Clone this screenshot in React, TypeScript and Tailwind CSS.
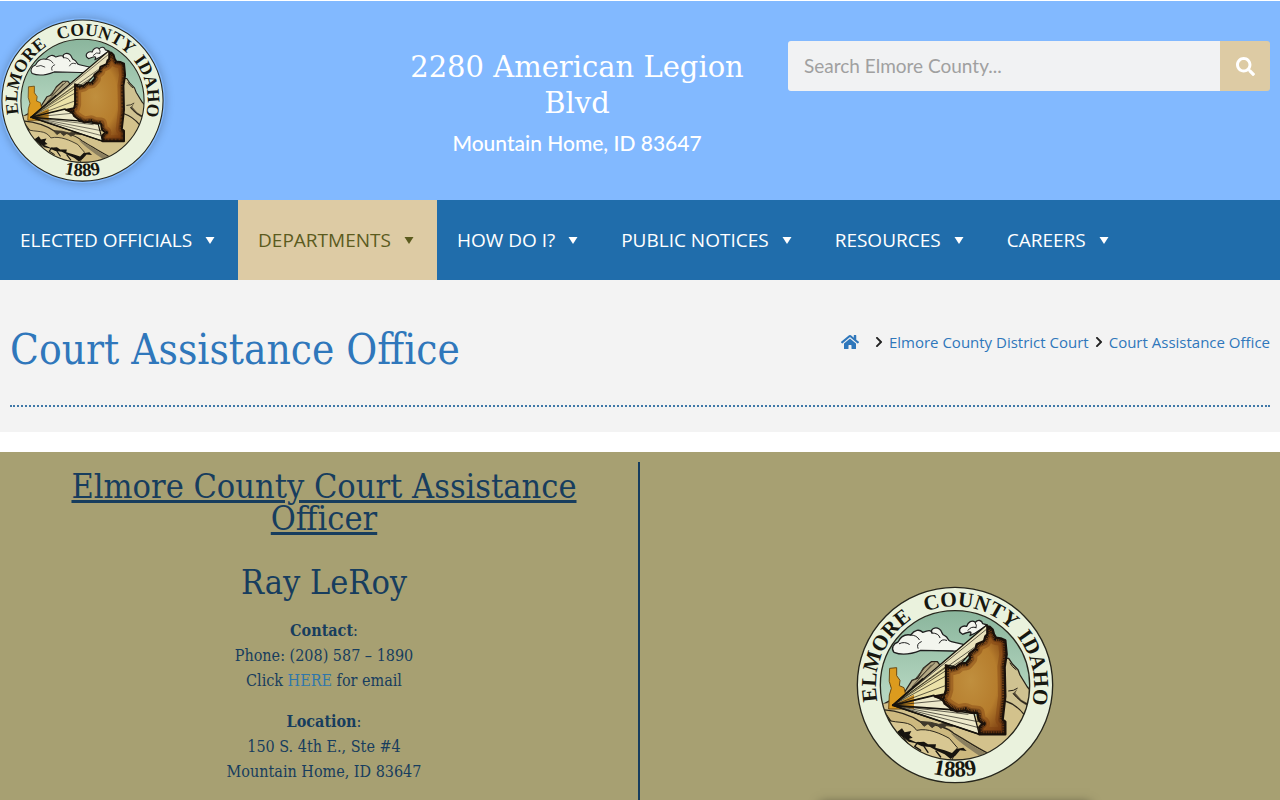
import { useId } from 'react';
import { FaChevronRight, FaHome, FaSearch } from 'react-icons/fa';

const serif = "font-['DejaVu_Serif_Condensed','DejaVu_Serif',serif]";
const sans = "font-['Open_Sans','Noto_Sans',sans-serif]";

const menu = [
    { label: 'ELECTED OFFICIALS', active: false },
    { label: 'DEPARTMENTS', active: true },
    { label: 'HOW DO I?', active: false },
    { label: 'PUBLIC NOTICES', active: false },
    { label: 'RESOURCES', active: false },
    { label: 'CAREERS', active: false },
];

const countyShape = 'M440 140 L448 142 L456 150 L460 164 L466 174 L480 176 L494 182 L498 224 L492 262 L494 350 L486 420 L494 426 L494 464 L416 464 L416 442 L426 432 L414 422 L410 400 L388 398 L374 392 L350 396 L328 384 L312 372 L306 358 L282 350 L312 344 L316 330 L316 258 L330 266 L346 262 L358 252 L376 250 L388 236 L386 222 L404 208 L408 194 L416 190 L430 184 L434 170 L440 164 Z';

function CountySeal({ className }: { className: string }) {
    const id = useId();

    return (
        <svg viewBox="43 16 600 600" className={className} role="img" aria-label="Elmore County seal">
            <defs>
                <linearGradient id={`${id}sky`} x1="0" y1="0" x2="0" y2="1">
                    <stop offset="0" stopColor="#8ab59c" />
                    <stop offset="0.55" stopColor="#b4d6c0" />
                    <stop offset="1" stopColor="#c5dccb" />
                </linearGradient>
                <radialGradient id={`${id}land`} cx="0.5" cy="0.5" r="0.62">
                    <stop offset="0" stopColor="#c08f3e" />
                    <stop offset="0.6" stopColor="#b67d2d" />
                    <stop offset="1" stopColor="#7a3d10" />
                </radialGradient>
                <clipPath id={`${id}disc`}>
                    <circle cx="343" cy="317" r="224" />
                </clipPath>
                <clipPath id={`${id}county`}>
                    <path d={countyShape} />
                </clipPath>
                <path id={`${id}top`} d="M343 554 A237 237 0 1 1 343.1 554" />
                <path id={`${id}bottom`} d="M65 313 A278 278 0 0 0 621 313" />
            </defs>

            <circle cx="343" cy="316" r="293" fill="#eaf2dd" stroke="#26261c" strokeWidth="4" />

            <g clipPath={`url(#${id}disc)`} strokeLinejoin="round" strokeLinecap="round">
                <rect x="110" y="90" width="466" height="460" fill={`url(#${id}sky)`} />

                {/* Clouds */}
                <g fill="#f3f5ee" stroke="#1e1e1e" strokeWidth="4">
                    <path d="M160 218 C150 205 158 192 172 187 C180 170 195 163 210 166 C222 150 236 148 246 158 C262 152 272 150 274 160 C268 148 284 140 296 148 C306 154 302 166 312 168 C326 174 318 184 332 186 L368 194 C372 206 354 216 336 214 L240 212 C210 224 184 228 160 218 Z" />
                    <path d="M358 158 C352 146 366 136 378 140 C382 126 394 120 404 128 C412 118 424 122 426 132 L440 136 L404 160 L388 168 C398 150 380 158 366 164 Z" />
                    <path d="M176 192 Q192 184 206 194 M210 166 Q228 166 236 180 M232 206 Q226 192 242 186 M274 160 Q294 160 298 174 M296 190 Q302 176 318 182 M382 152 Q392 138 406 144 M404 130 Q410 136 406 144" fill="none" strokeWidth="3" />
                </g>

                {/* Back ridges */}
                <path d="M120 378 L190 340 L214 302 L230 296 L248 266 L272 246 L290 246 L330 300 L340 420 Z" fill="#b3a884" stroke="#27221a" strokeWidth="4" />
                <path d="M222 300 L254 262 M214 322 L272 256 M234 296 L282 250" stroke="#4c4433" strokeWidth="3" />
                <path d="M490 235 L504 236 L516 254 L532 270 L538 286 L560 322 L580 344 L580 480 L480 500 Z" fill="#cfc291" stroke="#27221a" strokeWidth="4" />
                <path d="M516 342 L530 328 L524 340 L542 360 L566 374 L568 384 L540 366 Z" fill="#5a513c" />
                <path d="M508 250 Q514 262 526 270 M504 334 Q520 334 530 326 M518 342 Q536 366 566 376" fill="none" stroke="#221e16" strokeWidth="3" />

                {/* Foothills */}
                <path d="M100 372 C180 368 300 380 380 420 L490 370 C520 382 550 390 580 410 L580 560 L100 560 Z" fill="#d3c28c" />
                <path d="M494 364 Q526 374 550 404" fill="none" stroke="#2b261b" strokeWidth="4" />
                <path d="M126 390 C170 394 214 408 242 428 C282 432 326 446 340 462 C370 478 400 500 444 522 L400 550 L240 550 Z" fill="#cdb97f" stroke="#2b261b" strokeWidth="4" />
                <path d="M330 460 C356 470 392 500 436 520 L416 528 C380 504 350 484 330 460 Z" fill="#8b8060" />
                <path d="M134 420 C180 434 206 420 228 452 C262 444 300 462 326 476 L350 504 L330 550 L220 530 Z" fill="#d8c792" stroke="#2b261b" strokeWidth="3" />
                <path d="M238 426 L250 440 L262 432 L274 444 L288 434 L300 446 L318 438 L336 440 L320 430 L294 434 L270 428 Z" fill="#40392b" stroke="#40392b" strokeWidth="3" />
                <path d="M170 456 L184 446 L192 458 L212 454 L206 466 L216 474 L204 478 L226 488 L250 486 L262 494 L286 494 L284 504 L312 512 L334 520 L346 508 L368 504 L378 514 L358 512 L344 528 L330 538 L312 524 L290 514 L268 502 L244 500 L222 490 L204 486 L188 472 L172 466 Z" fill="#17140f" />
                <path d="M232 488 L222 500 L240 512 M250 500 L262 518 M286 514 L300 532 M186 470 L204 496" fill="none" stroke="#17140f" strokeWidth="4" />

                {/* Idaho outline */}
                <path d="M148 266 L168 264 L168 288 L178 302 L176 318 L190 324 L194 342 L220 345 L220 388 L144 388 L146 346 L152 326 L146 306 Z" fill="#dc9b1e" stroke="#6b4810" strokeWidth="3" />

                {/* Projection rays */}
                <g stroke="#16130d">
                    <path d="M156 377 L438 136 L462 180 L386 224 L350 262 L314 256 L312 350 Z" fill="#e9e2bc" strokeWidth="4" />
                    <path d="M156 377 L278 346 L324 374 L330 392 L400 402 L416 464 Z" fill="#eeeacb" strokeWidth="4" />
                    <path d="M180 358 L314 256 L314 340 L200 364 Z" fill="#ece2a8" stroke="none" />
                    <path d="M156 377 L220 345 L220 388 Z" fill="#c78a22" stroke="none" />
                    <path d="M156 377 L436 150 M156 377 L400 204 M156 377 L372 236 M156 377 L314 262 M156 377 L314 290 M156 377 L314 318 M156 377 L310 362 M156 377 L382 404 M156 377 L412 426 M156 377 L414 444" fill="none" strokeWidth="2" />
                    <path d="M156 377 L246 298 M156 377 L280 347 M156 377 L330 390 M156 377 L416 464" fill="none" strokeWidth="5" />
                </g>

                {/* Elmore County, with the shading kept inside its border */}
                <path d={countyShape} fill={`url(#${id}land)`} />
                <g clipPath={`url(#${id}county)`} fill="none">
                    <path d={countyShape} stroke="#7a3d10" strokeOpacity="0.4" strokeWidth="44" />
                    <path d={countyShape} stroke="#4a240c" strokeOpacity="0.4" strokeWidth="26" />
                    <path d={countyShape} stroke="#19100a" strokeWidth="18" strokeDasharray="2 3" strokeLinecap="butt" />
                </g>
                <path d={countyShape} fill="none" stroke="#19100a" strokeWidth="7" />
            </g>

            <circle cx="343" cy="317" r="224" fill="none" stroke="#26261c" strokeWidth="4" />

            <g className="font-['Liberation_Serif',serif] font-bold" fill="#17170f" fontSize="64">
                <text><textPath href={`#${id}top`} startOffset="324">ELMORE</textPath></text>
                <text><textPath href={`#${id}top`} startOffset="655">COUNTY</textPath></text>
                <text><textPath href={`#${id}top`} startOffset="957">IDAHO</textPath></text>
                <text textAnchor="middle" fontSize="68"><textPath href={`#${id}bottom`} startOffset="50%">1889</textPath></text>
            </g>
        </svg>
    );
}

function Header() {
    return (
        <header className="grid min-h-[200px] grid-cols-[3fr_3fr_4fr] border-t border-white bg-[#82b9ff]">
            <a href="#home" className="w-fit pt-[17px]">
                <CountySeal className="size-[165px] rounded-full shadow-[0_0_10px_rgba(0,0,0,0.25)]" />
            </a>

            <div className="pt-12 pl-0.5 text-center text-white">
                <h2 className="font-['DejaVu_Serif',serif] text-[29px] leading-9">2280 American Legion Blvd</h2>
                <p className="mt-2 font-['Lato',sans-serif] text-[21px] leading-7 font-medium">Mountain Home, ID 83647</p>
            </div>

            <form role="search" className="flex h-[90px] pt-10 pr-2.5 pl-5">
                <input
                    type="search"
                    aria-label="Search Elmore County"
                    placeholder="Search Elmore County..."
                    className="min-w-0 flex-1 rounded-l-[3px] bg-[#f1f2f3] px-4 font-['Lato',sans-serif] text-[19px] text-gray-700 outline-none placeholder:text-[#a0a0a0]"
                />
                <button
                    type="submit"
                    aria-label="Search"
                    className="flex w-[50px] items-center justify-center rounded-r-[3px] bg-[#ddcba4] text-white"
                >
                    <FaSearch size={19} />
                </button>
            </form>
        </header>
    );
}

function MainMenu() {
    return (
        <nav className={`${sans} flex bg-[#206dab] text-[19px]`}>
            {menu.map(item => (
                <a
                    key={item.label}
                    href="#menu"
                    className={`flex h-20 items-center gap-3 px-5 whitespace-nowrap ${item.active ? 'bg-[#ddcba4] text-[#5b5b1e]' : 'text-white'}`}
                >
                    {item.label}
                    <svg viewBox="0 0 14 8" className="h-2 w-3.5" fill="currentColor" aria-hidden="true">
                        <path d="M1.5 1 H10.5 L6 8 Z" />
                    </svg>
                </a>
            ))}
        </nav>
    );
}

function PageTitle() {
    return (
        <section className="bg-[#f3f3f3] px-2.5 pt-10 pb-[25px] text-[#2f77bb]">
            <div className="flex justify-between border-b-2 border-dotted border-[#3f78a8] pb-[25px]">
                <h1 className={`${serif} text-[42px] leading-[60px]`}>Court Assistance Office</h1>
                <div className={`${sans} flex h-11 items-center text-[15px]`}>
                    <a href="#home" aria-label="Home"><FaHome size={18} /></a>
                    <FaChevronRight size={12} className="mr-1 ml-3.5 text-[#222222]" />
                    <a href="#district-court">Elmore County District Court</a>
                    <FaChevronRight size={12} className="mx-1 text-[#222222]" />
                    <a href="#assistance">Court Assistance Office</a>
                </div>
            </div>
        </section>
    );
}

function Officer() {
    return (
        <section className="mt-5 grid flex-1 grid-cols-2 overflow-hidden bg-[#a7a072] pt-2.5">
            <div className={`${serif} border-r-2 border-[#173d5e] pt-2 pb-5 pl-2.5 text-center text-[#173d5e]`}>
                <h2 className="mx-auto max-w-[540px] text-[34px] leading-8 underline">Elmore County Court Assistance Officer</h2>
                <h2 className="mt-8 text-[34px] leading-8">Ray LeRoy</h2>
                <p className="mt-5 text-base leading-[25px]">
                    <strong>Contact</strong>:<br />
                    Phone: (208) 587 – 1890<br />
                    Click <a href="#email" className="text-[#2f77ab]">HERE</a> for email
                </p>
                <p className="mt-4 text-base leading-[25px]">
                    <strong>Location</strong>:<br />
                    150 S. 4th E., Ste #4<br />
                    Mountain Home, ID 83647
                </p>
            </div>

            <div className="flex flex-col items-center pt-[123px] pr-2.5">
                <CountySeal className="size-[200px]" />
                <div className="mt-[18px] -mb-10 h-10 w-[270px] shadow-[0_0_10px_rgba(0,0,0,0.5)]" />
            </div>
        </section>
    );
}

export default function App() {
    return (
        <div className="flex min-h-screen flex-col bg-white">
            <Header />
            <MainMenu />
            <PageTitle />
            <Officer />
        </div>
    );
}
